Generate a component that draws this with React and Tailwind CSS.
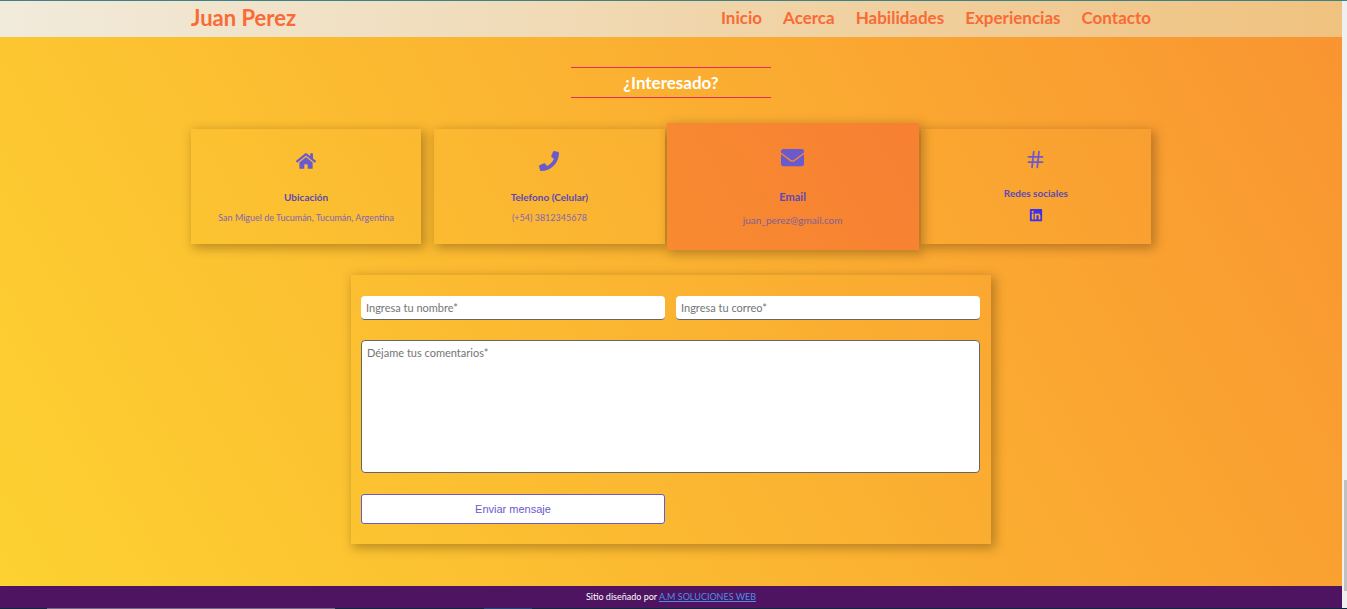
import React from "react";
import { FaHome, FaPhone, FaEnvelope, FaLinkedin } from "react-icons/fa";
import { FiHash } from "react-icons/fi";

const links = [
  ["Inicio", "#inicio"],
  ["Acerca", "#acerca"],
  ["Habilidades", "#habilidades"],
  ["Experiencias", "#experiencias"],
  ["Contacto", "#contacto"],
];

const shadow = "shadow-[3px_3px_10px_1px_rgba(80,50,10,0.38)]";

function Card({ icon, title, children }) {
  return (
    <article className={`${shadow} flex flex-col items-center pt-5 text-[9px] leading-3 text-[#8266b4]`}>
      <div className="flex h-[23px] items-center text-[#6a5acd]">{icon}</div>
      <h3 className="mt-[19px] text-[10px] font-bold text-[#5b49b4]">{title}</h3>
      <p className="mt-[9px] text-center">{children}</p>
    </article>
  );
}

export default function App() {
  const field =
    "h-6 w-full rounded border-b border-[#666] bg-white px-[5px] pb-px text-[11px] leading-4 placeholder:text-[#757575] outline-none";
  return (
    <div className="flex min-h-screen flex-col border-t border-[#3c8288] font-[Lato,sans-serif]">
      <div className="flex flex-1">
        <div className="flex min-w-0 flex-1 flex-col bg-[linear-gradient(60deg,#fdd231_0%,#fbb531_48%,#f99431_100%)]">
          <header className="bg-[linear-gradient(90deg,#f1ebdc,#f0c27f)] text-[#f96a36]">
            <div className="mx-auto flex h-9 max-w-[960px] items-center justify-between pb-0.5">
              <a href="#inicio" className="text-[22px] leading-6 font-bold">Juan Perez</a>
              <nav className="flex gap-[21px] text-[17px] leading-6 font-bold">
                {links.map(([label, href]) => (
                  <a key={href} href={href}>{label}</a>
                ))}
              </nav>
            </div>
          </header>

          <main className="flex-1 pt-[30px] pb-[42px]">
            <h2 className="mx-auto w-[200px] border-y border-[#e52e5c] text-center text-[17px] leading-[29px] font-bold text-white">
              ¿Interesado?
            </h2>

            <section className="mx-auto mt-[31px] grid h-[115px] max-w-[960px] grid-cols-4 gap-[13px]">
              <Card icon={<FaHome size={20} />} title="Ubicación">
                San Miguel de Tucumán, Tucumán, Argentina
              </Card>
              <Card icon={<FaPhone size={20} />} title="Telefono (Celular)">
                (+54) 3812345678
              </Card>
              <article className={`${shadow} z-10 -mx-[11px] -my-[6px] flex flex-col items-center bg-[linear-gradient(60deg,#f88a30,#f78033)] pt-[23px] text-[10px] leading-3 text-[#80609a]`}>
                <div className="flex h-[23px] items-center text-[#6a5acd]"><FaEnvelope size={23} /></div>
                <h3 className="mt-[22px] text-[11px] font-bold text-[#5b49b4]">Email</h3>
                <p className="mt-[11px]">juan_perez@gmail.com</p>
              </article>
              <article className={`${shadow} flex flex-col items-center pt-5 text-[10px] leading-3 text-[#6a5acd]`}>
                <FiHash size={21} />
                <h3 className="mt-[17px] font-bold text-[#5b49b4]">Redes sociales</h3>
                <a href="#linkedin" aria-label="LinkedIn" className="mt-[9px] text-[#3b2ff0]"><FaLinkedin size={14} /></a>
              </article>
            </section>

            <form className={`${shadow} mx-auto mt-[31px] grid max-w-[640px] grid-cols-2 gap-x-[11px] gap-y-5 pt-[21px] pr-[11px] pb-5 pl-[10px]`}>
              <input type="text" aria-label="Nombre" placeholder="Ingresa tu nombre*" className={field} />
              <input type="email" aria-label="Correo" placeholder="Ingresa tu correo*" className={field} />
              <textarea
                aria-label="Comentarios"
                placeholder="Déjame tus comentarios*"
                className="col-span-2 h-[133px] resize-none rounded border border-[#666] bg-white px-[5px] py-1 text-[11px] leading-4 outline-none placeholder:text-[#757575]"
              />
              <button type="button" className="mt-px h-[30px] rounded-[3px] border border-[#6a5acd] bg-white font-['Liberation_Sans',sans-serif] text-[11px] leading-4 text-[#6a5acd]">
                Enviar mensaje
              </button>
            </form>
          </main>

          <footer className="bg-[#4e1361] py-[3px] text-center text-[9px] leading-4 text-white">
            Sitio diseñado por{" "}
            <a href="#am" className="text-[#4a90e2] underline">A.M SOLUCIONES WEB</a>
          </footer>
        </div>
        <div className="flex w-[5px] flex-col items-end justify-end bg-[#f0f0f0] pb-[17px]">
          <div className="h-[111px] w-[3px] bg-[#c1c1c1]" />
        </div>
      </div>
      <div className="flex h-px bg-[#0b2a40]">
        <div className="ml-[47px] h-px w-72 bg-[#706a88]" />
        <div className="ml-[149px] h-px w-12 bg-[#1c4b78]" />
      </div>
    </div>
  );
}
